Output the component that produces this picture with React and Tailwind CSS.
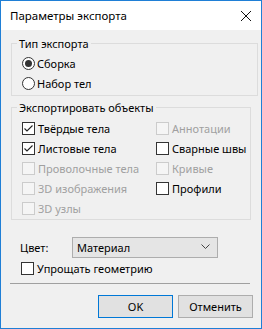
import React from 'react';

const FONT = { fontFamily: '"Segoe UI", "Noto Sans", Arial, sans-serif' };

const Check = ({ checked, disabled, label }) => (
  <div className="flex items-center h-[20px]">
    <span className={`w-[13px] h-[13px] border flex items-center justify-center shrink-0 ${disabled ? 'border-[#cccccc] bg-[#f5f5f5]' : 'border-[#333333] bg-white'}`}>
      {checked && (
        <svg width="11" height="11" viewBox="0 0 11 11">
          <path d="M1.5 5.5 L4 8 L9.5 2.5" fill="none" stroke="#222" strokeWidth="1.1" />
        </svg>
      )}
    </span>
    <span className={`ml-[3px] whitespace-nowrap ${disabled ? 'text-[#a0a0a0]' : 'text-black'}`}>{label}</span>
  </div>
);

const Radio = ({ checked, label }) => (
  <div className="flex items-center h-[20px]">
    <span className="w-[13px] h-[13px] rounded-full border border-[#333333] bg-white flex items-center justify-center shrink-0">
      {checked && <span className="w-[7px] h-[7px] rounded-full bg-[#333333]" />}
    </span>
    <span className="ml-[2px] text-black whitespace-nowrap">{label}</span>
  </div>
);

export default function App() {
  return (
    <div style={FONT} className="w-[262px] h-[329px] bg-[#f0f0f0] border border-[#1f7fd6] flex flex-col text-[11px] leading-[15px] text-black overflow-hidden">
      <div className="h-[29px] bg-white flex items-center justify-between pl-[9px] pr-[9px]">
        <span className="text-[11.5px]">Параметры экспорта</span>
        <svg width="12" height="12" viewBox="0 0 12 12">
          <path d="M1 1 L11 11 M11 1 L1 11" stroke="#111" strokeWidth="1" />
        </svg>
      </div>

      <fieldset className="ml-[10px] mt-[6px] w-[247px] border border-[#dcdcdc] pb-[2px]">
        <legend className="ml-[5px] px-[2px]">Тип экспорта</legend>
        <div className="pl-[10px] pt-[2px]">
          <Radio checked label="Сборка" />
          <Radio label="Набор тел" />
        </div>
      </fieldset>

      <fieldset className="ml-[10px] mt-[4px] w-[240px] border border-[#dcdcdc] pb-[1px]">
        <legend className="ml-[5px] px-[2px]">Экспортировать объекты</legend>
        <div className="pl-[10px] pt-[3px] grid grid-cols-[134px_1fr]">
          <Check checked label="Твёрдые тела" />
          <Check disabled label="Аннотации" />
          <Check checked label="Листовые тела" />
          <Check label="Сварные швы" />
          <Check disabled label="Проволочные тела" />
          <Check disabled label="Кривые" />
          <Check disabled label="3D изображения" />
          <Check label="Профили" />
          <Check disabled label="3D узлы" />
        </div>
      </fieldset>

      <div className="mt-[16px] h-[22px] flex items-center pl-[19px]">
        <span className="w-[52px]">Цвет:</span>
        <div className="w-[146px] h-[21px] border border-[#adadad] bg-[#e5e5e5] flex items-center justify-between pl-[4px] pr-[7px]">
          <span>Материал</span>
          <svg width="9" height="6" viewBox="0 0 9 6">
            <path d="M0.5 0.5 L4.5 4.5 L8.5 0.5" fill="none" stroke="#444" strokeWidth="1" />
          </svg>
        </div>
      </div>

      <div className="pl-[20px]">
        <Check label="Упрощать геометрию" />
      </div>

      <div className="ml-[9px] mt-[5px] w-[240px] h-px bg-[#a0a0a0]" />

      <div className="mt-[11px] flex justify-end gap-[5px] pr-[8px]">
        <button className="w-[75px] h-[23px] border border-[#0078d7] bg-[#e1e1e1] text-black">OK</button>
        <button className="w-[75px] h-[23px] border border-[#adadad] bg-[#e1e1e1] text-black">Отменить</button>
      </div>
    </div>
  );
}
